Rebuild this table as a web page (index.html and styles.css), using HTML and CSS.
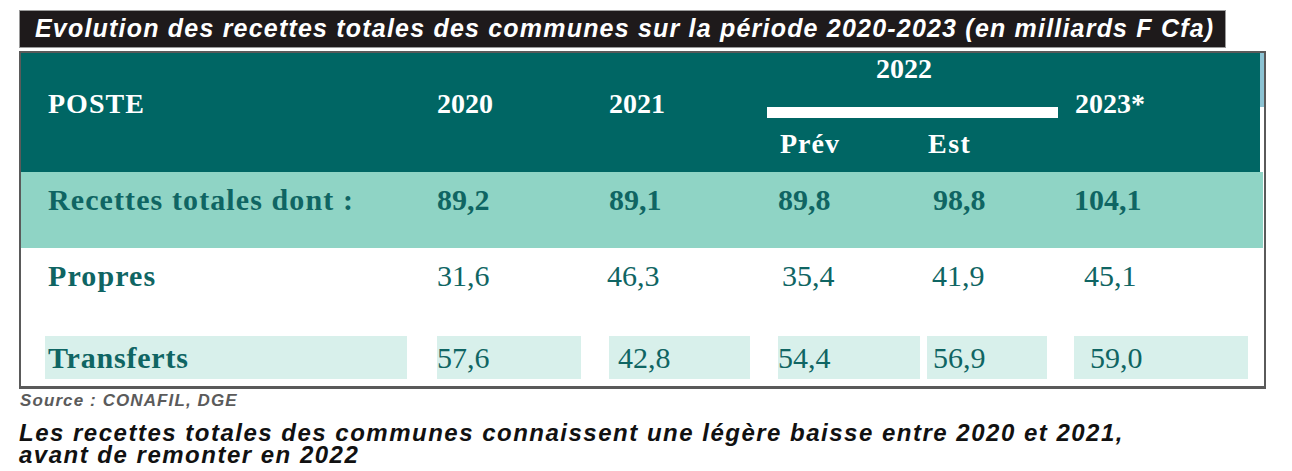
FILE: index.html
```html
<!DOCTYPE html>
<html lang="fr">
<head>
<meta charset="utf-8">
<link rel="stylesheet" href="styles.css">
</head>
<body>
<div class="page">
  <div class="title">Evolution des recettes totales des communes sur la période 2020-2023 (en milliards F Cfa)</div>
  <div class="table">
    <div class="thead">
      <div class="h-poste">POSTE</div>
      <div class="h-y h-2020">2020</div>
      <div class="h-y h-2021">2021</div>
      <div class="h-2022">2022</div>
      <div class="h-bar"></div>
      <div class="h-prev">Prév</div>
      <div class="h-est">Est</div>
      <div class="h-y h-2023">2023*</div>
      <div class="h-scroll"></div>
    </div>
    <div class="row total">
      <div class="c label">Recettes totales dont :</div>
      <div class="c">89,2</div>
      <div class="c">89,1</div>
      <div class="c">89,8</div>
      <div class="c v-est">98,8</div>
      <div class="c">104,1</div>
    </div>
    <div class="row propres">
      <div class="c label">Propres</div>
      <div class="c">31,6</div>
      <div class="c v-2021">46,3</div>
      <div class="c v-prev">35,4</div>
      <div class="c v-est">41,9</div>
      <div class="c v-2023">45,1</div>
    </div>
    <div class="row transferts">
      <div class="c label">Transferts</div>
      <div class="c">57,6</div>
      <div class="c v-2021b">42,8</div>
      <div class="c">54,4</div>
      <div class="c v-est">56,9</div>
      <div class="c v-2023b">59,0</div>
    </div>
  </div>
  <div class="source">Source : CONAFIL, DGE</div>
  <div class="caption">
    <div class="cap-line">Les recettes totales des communes connaissent une légère baisse entre 2020 et 2021,</div>
    <div class="cap-line">avant de remonter en 2022</div>
  </div>
</div>
</body>
</html>
```
FILE: styles.css
```css
html, body {
  margin: 0;
  padding: 0;
  background: #ffffff;
}
.page {
  padding: 10px 0 0 19px;
  width: 1247px;
}
.title {
  width: 1207px;
  height: 38px;
  box-sizing: border-box;
  background: #1e1a1b;
  border: 1px solid #9a9a9a;
  color: #ffffff;
  font-family: "Liberation Sans", Arial, sans-serif;
  font-weight: bold;
  font-style: italic;
  font-size: 25px;
  letter-spacing: 1.2px;
  line-height: 35px;
  padding-left: 15px;
  white-space: nowrap;
}
.table {
  margin-top: 3px;
  width: 1247px;
  height: 338px;
  box-sizing: border-box;
  border: 2px solid #5a5a5a;
  border-bottom-width: 3px;
  font-family: "Liberation Serif", "Times New Roman", serif;
  color: #0f6563;
}
.thead {
  position: relative;
  display: grid;
  grid-template-columns: 392px 172px 169px 149px 147px 174px;
  grid-template-rows: 40px 32px 47px;
  padding-left: 24px;
  margin-right: 4px;
  height: 119px;
  background: #006664;
  color: #ffffff;
  font-weight: bold;
  font-size: 28px;
}
.h-scroll {
  position: absolute;
  right: -4px;
  top: 0;
  width: 4px;
  height: 54px;
  background: #8cc3d3;
}
.h-poste, .h-y {
  grid-row: 1 / 4;
  align-self: start;
  padding-top: 37px;
  line-height: 28px;
}
.h-poste { grid-column: 1; padding-left: 3px; letter-spacing: 1px; }
.h-2020 { grid-column: 2; }
.h-2021 { grid-column: 3; }
.h-2023 { grid-column: 6; padding-left: 1px; }
.h-2022 {
  grid-column: 4 / 6;
  grid-row: 1;
  justify-self: start;
  margin-left: 98px;
  padding-top: 2px;
  line-height: 28px;
}
.h-bar {
  grid-column: 4 / 6;
  grid-row: 2;
  margin-left: -11px;
  width: 291px;
  height: 11px;
  margin-top: 14px;
  background: #ffffff;
}
.h-prev {
  grid-column: 4;
  grid-row: 3;
  padding-left: 2px;
  padding-top: 5px;
  line-height: 28px;
  letter-spacing: 1px;
}
.h-est {
  grid-column: 5;
  grid-row: 3;
  padding-left: 1px;
  padding-top: 5px;
  line-height: 28px;
  letter-spacing: 1.5px;
}
.row {
  display: grid;
  grid-template-columns: 392px 172px 169px 149px 147px 174px;
  padding-left: 24px;
  font-size: 30px;
}
.row .label { letter-spacing: 1.1px; }
.total {
  height: 76px;
  background: #8fd4c5;
  font-weight: bold;
  align-items: start;
  margin-right: 1px;
}
.total .c { padding-top: 12px; line-height: 32px; }
.total .label { padding-left: 3px; }
.total .v-est { padding-left: 6px; }
.propres {
  height: 88px;
}
.propres .c { padding-top: 12px; line-height: 32px; }
.propres .label { font-weight: bold; padding-left: 3px; }
.propres .v-2021 { margin-left: -2px; }
.propres .v-prev { padding-left: 4px; }
.propres .v-est { padding-left: 5px; }
.propres .v-2023 { padding-left: 10px; }
.transferts .c {
  background: #d8f0eb;
  height: 43px;
  line-height: 43px;
  box-sizing: border-box;
}
.transferts .label {
  font-weight: bold;
  width: 362px;
  padding-left: 3px;
  letter-spacing: 0.8px;
}
.transferts .c:nth-child(2) { width: 144px; }
.transferts .c:nth-child(3) { width: 141px; }
.transferts .c:nth-child(4) { width: 142px; }
.transferts .c:nth-child(5) { width: 120px; }
.transferts .c:nth-child(6) { width: 174px; }
.transferts .v-2021b { padding-left: 9px; }
.transferts .v-est { padding-left: 6px; }
.transferts .v-2023b { padding-left: 16px; }
.source {
  margin-top: 2px;
  margin-left: 1px;
  font-family: "Liberation Sans", Arial, sans-serif;
  font-weight: bold;
  font-style: italic;
  font-size: 17px;
  letter-spacing: 1.1px;
  line-height: 20px;
  color: #5b5b5b;
}
.caption {
  margin-top: 11px;
  font-family: "Liberation Sans", Arial, sans-serif;
  font-weight: bold;
  font-style: italic;
  font-size: 24px;
  letter-spacing: 1.5px;
  color: #111111;
  white-space: nowrap;
}
.cap-line {
  height: 22px;
  line-height: 22px;
}
```
